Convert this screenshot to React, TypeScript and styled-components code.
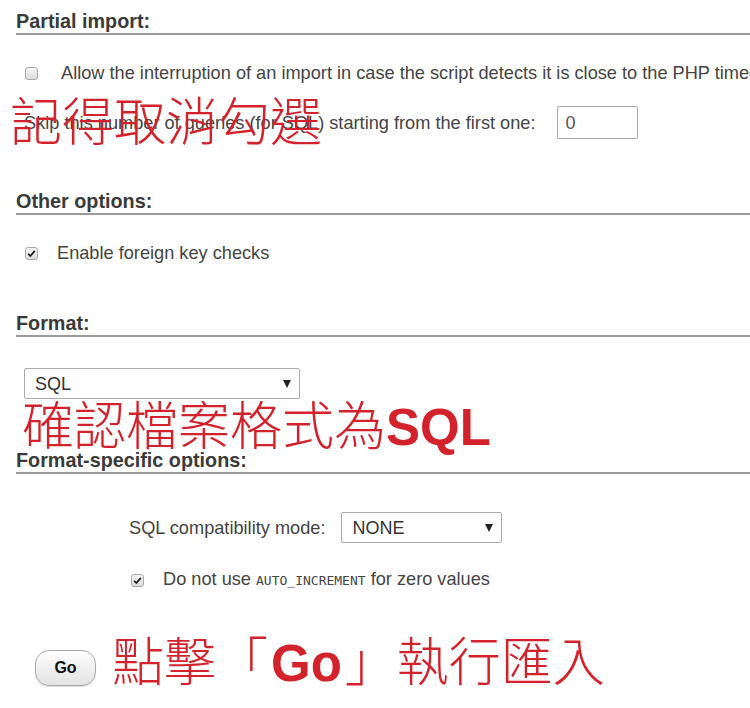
import React from 'react';
import styled, { createGlobalStyle } from 'styled-components';

const GlobalStyle = createGlobalStyle`
  html, body {
    margin: 0;
    padding: 0;
    background: #fff;
    overflow: hidden;
  }
  body {
    font-family: "Liberation Sans", Arial, sans-serif;
    color: #444;
  }
`;

const Page = styled.div`
  position: relative;
  width: 1000px;
  height: 708px;
  padding: 9px 0 0 16px;
  box-sizing: border-box;
`;

const Heading = styled.div<{ $top?: number }>`
  margin-top: ${(p) => p.$top ?? 0}px;
  height: 24px;
  line-height: 24px;
  font-size: 19.8px;
  font-weight: bold;
  color: #3a3a3a;
  border-bottom: 2px solid #9a9a9a;
`;

const Row = styled.div<{ $top: number; $indent?: number; $gap?: number }>`
  display: flex;
  align-items: center;
  margin-top: ${(p) => p.$top}px;
  padding-left: ${(p) => p.$indent ?? 9}px;
  gap: ${(p) => p.$gap ?? 19}px;
  font-size: 18.2px;
  line-height: 24px;
  white-space: nowrap;
`;

const Box = styled.span`
  flex: none;
  width: 13px;
  height: 13px;
  box-sizing: border-box;
  border: 1px solid #a9a9a9;
  border-radius: 3px;
  background: linear-gradient(#f6f6f6, #dcdcdc);
  display: flex;
  align-items: center;
  justify-content: center;
`;

const Mono = styled.code`
  font-family: "DejaVu Sans Mono", "Liberation Mono", monospace;
  font-size: 13px;
  color: #444;
`;

const NumberBox = styled.div`
  width: 81px;
  height: 33px;
  box-sizing: border-box;
  border: 1px solid #aaa;
  border-radius: 2px;
  padding-left: 7px;
  display: flex;
  align-items: center;
  font-size: 18px;
  color: #555;
`;

const Select = styled.div<{ $width: number }>`
  width: ${(p) => p.$width}px;
  height: 31px;
  box-sizing: border-box;
  border: 1px solid #aaa;
  border-radius: 2px;
  padding: 0 8px 0 10px;
  display: flex;
  align-items: center;
  justify-content: space-between;
  font-size: 18px;
  color: #333;
`;

const Arrow = styled.span`
  width: 0;
  height: 0;
  border-left: 4px solid transparent;
  border-right: 4px solid transparent;
  border-top: 8px solid #222;
`;

const GoButton = styled.button`
  margin: 57px 0 0 19px;
  width: 61px;
  height: 36px;
  border: 1px solid #a8a8a8;
  border-radius: 14px;
  background: linear-gradient(#ffffff, #e2e2e2);
  font-family: "Liberation Sans", Arial, sans-serif;
  font-weight: bold;
  font-size: 16px;
  color: #111;
  box-shadow: 0 1px 1px rgba(0, 0, 0, 0.15);
  padding: 0;
`;

const Note = styled.div<{ $x: number; $y: number }>`
  position: absolute;
  left: ${(p) => p.$x}px;
  top: ${(p) => p.$y}px;
  font-family: "Noto Sans CJK TC", "Noto Sans CJK SC", sans-serif;
  font-size: 52px;
  line-height: 52px;
  font-weight: 300;
  color: #d3222c;
  white-space: nowrap;
`;

const NoteLatin = styled.span<{ $size?: number; $pad?: number }>`
  font-family: "Liberation Sans", Arial, sans-serif;
  font-weight: bold;
  font-size: ${(p) => p.$size ?? 50}px;
  padding: 0 ${(p) => p.$pad ?? 0}px;
`;

function CheckBox({ checked }: { checked?: boolean }) {
  return (
    <Box>
      {checked && (
        <svg width="9" height="9" viewBox="0 0 9 9">
          <path d="M1.2 4.8 L3.4 7 L7.8 1.8" fill="none" stroke="#222" strokeWidth="1.8" />
        </svg>
      )}
    </Box>
  );
}

export default function App() {
  return (
    <>
      <GlobalStyle />
      <Page>
        <Heading>Partial import:</Heading>
        <Row $top={26} $gap={23}>
          <CheckBox />
          <span>
            Allow the interruption of an import in case the script detects it is close to the PHP timeout limit.
          </span>
        </Row>
        <Row $top={21} $indent={8} $gap={22}>
          <span>Skip this number of queries (for SQL) starting from the first one:</span>
          <NumberBox>0</NumberBox>
        </Row>

        <Heading $top={50}>Other options:</Heading>
        <Row $top={26}>
          <CheckBox checked />
          <span>Enable foreign key checks</span>
        </Row>

        <Heading $top={46}>Format:</Heading>
        <Row $top={31} $indent={8}>
          <Select $width={276}>
            <span>SQL</span>
            <Arrow />
          </Select>
        </Row>

        <Heading $top={49}>Format-specific options:</Heading>
        <Row $top={38} $indent={113} $gap={16}>
          <span>SQL compatibility mode:</span>
          <Select $width={161}>
            <span>NONE</span>
            <Arrow />
          </Select>
        </Row>
        <Row $top={24} $indent={115}>
          <CheckBox checked />
          <span>
            Do not use <Mono>AUTO_INCREMENT</Mono> for zero values
          </span>
        </Row>

        <GoButton>Go</GoButton>

        <Note $x={10} $y={93}>記得取消勾選</Note>
        <Note $x={22} $y={397}>
          確認檔案格式為<NoteLatin $size={51}>SQL</NoteLatin>
        </Note>
        <Note $x={112} $y={633}>
          點擊「<NoteLatin $size={51} $pad={3}>Go</NoteLatin>」執行匯入
        </Note>
      </Page>
    </>
  );
}
